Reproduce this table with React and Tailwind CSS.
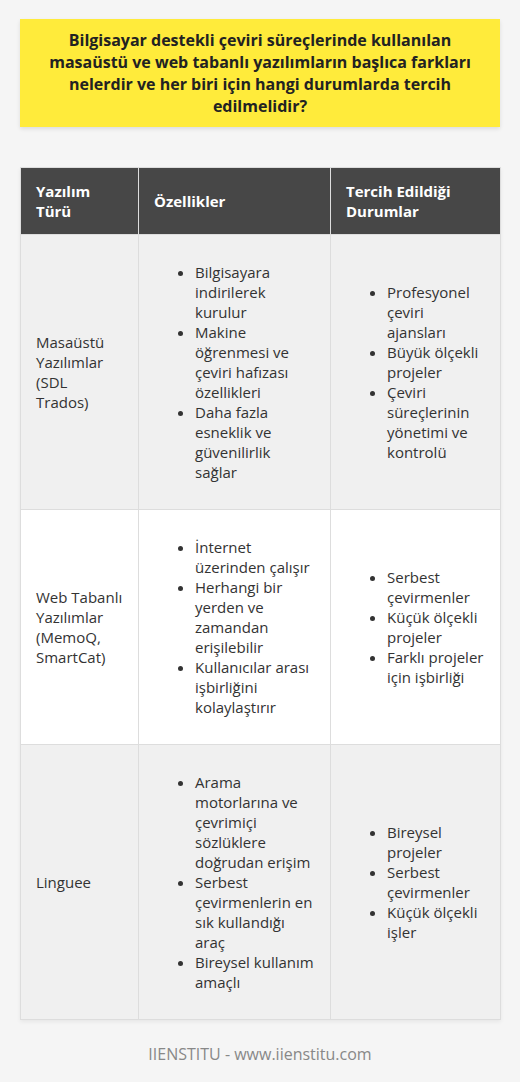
import React from "react";

const rows = [
  {
    name: ["Masaüstü Yazılımlar (SDL Trados)"],
    feats: [
      "Bilgisayara indirilerek kurulur",
      "Makine öğrenmesi ve çeviri hafızası özellikleri",
      "Daha fazla esneklik ve güvenilirlik sağlar",
    ],
    pref: ["Profesyonel çeviri ajansları", "Büyük ölçekli projeler", "Çeviri süreçlerinin yönetimi ve kontrolü"],
    bg: "bg-[#f0f0f0]",
  },
  {
    name: ["Web Tabanlı Yazılımlar (MemoQ, SmartCat)"],
    feats: ["İnternet üzerinden çalışır", "Herhangi bir yerden ve zamandan erişilebilir", "Kullanıcılar arası işbirliğini kolaylaştırır"],
    pref: ["Serbest çevirmenler", "Küçük ölçekli projeler", "Farklı projeler için işbirliği"],
    bg: "bg-white",
  },
  {
    name: ["Linguee"],
    feats: [
      "Arama motorlarına ve çevrimiçi sözlüklere doğrudan erişim",
      "Serbest çevirmenlerin en sık kullandığı araç",
      "Bireysel kullanım amaçlı",
    ],
    pref: ["Bireysel projeler", "Serbest çevirmenler", "Küçük ölçekli işler"],
    bg: "bg-[#f0f0f0]",
  },
];

function List({ items }) {
  return (
    <ul className="list-disc pl-10 my-[15px]">
      {items.map((t, i) => (
        <li key={i}>{t}</li>
      ))}
    </ul>
  );
}

export default function App() {
  return (
    <div
      className="min-h-[1082px] w-[520px] bg-[#f5f5f5] px-5 pt-[19px] text-[#333]"
      style={{ fontFamily: '"Open Sans", "Noto Sans", sans-serif' }}
    >
      <div className="bg-[#ffeb3b] shadow-[0_2px_4px_rgba(0,0,0,0.1)] px-5 py-[10px] text-center text-[16px] leading-[22px] font-bold text-[#222]">
        Bilgisayar destekli çeviri süreçlerinde kullanılan masaüstü ve web tabanlı yazılımların başlıca farkları nelerdir ve her biri için hangi durumlarda tercih edilmelidir?
      </div>

      <table className="mt-10 w-[480px] table-fixed border-collapse text-[15px] leading-5 shadow-[0_2px_4px_rgba(0,0,0,0.06)]">
        <colgroup>
          <col className="w-[118px]" />
          <col className="w-[192px]" />
          <col className="w-[170px]" />
        </colgroup>
        <thead>
          <tr className="bg-[#474747] text-white">
            <th className="border border-[#dddddd] px-[15px] py-[13px] text-left font-bold align-middle">Yazılım Türü</th>
            <th className="border border-[#dddddd] px-[15px] py-[13px] text-left font-bold align-middle">Özellikler</th>
            <th className="border border-[#dddddd] px-[15px] py-[13px] text-left font-bold align-middle">Tercih Edildiği Durumlar</th>
          </tr>
        </thead>
        <tbody>
          {rows.map((r, i) => (
            <tr key={i} className={r.bg}>
              <td className="border border-[#dddddd] px-[15px] py-3 align-middle">{r.name}</td>
              <td className="border border-[#dddddd] pl-4 pr-4 py-3 align-middle">
                <List items={r.feats} />
              </td>
              <td className="border border-[#dddddd] pl-4 pr-4 py-3 align-middle">
                <List items={r.pref} />
              </td>
            </tr>
          ))}
        </tbody>
      </table>

      <div className="pt-[22px] text-center text-[16px] text-[#888]">IIENSTITU - www.iienstitu.com</div>
    </div>
  );
}
